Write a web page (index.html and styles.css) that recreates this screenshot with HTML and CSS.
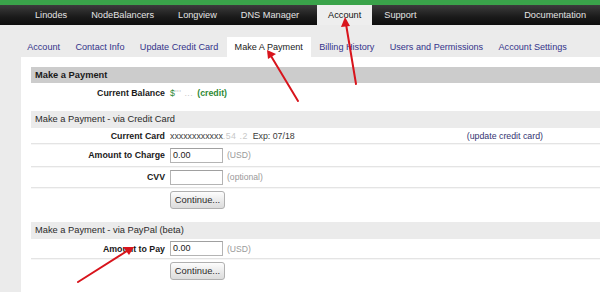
FILE: index.html
```html
<!DOCTYPE html>
<html>
<head>
<meta charset="utf-8">
<link rel="stylesheet" href="styles.css">
</head>
<body>
<div class="greenbar"></div>
<nav class="nav">
  <a class="nav-item">Linodes</a>
  <a class="nav-item">NodeBalancers</a>
  <a class="nav-item">Longview</a>
  <a class="nav-item">DNS Manager</a>
  <a class="nav-item active">Account</a>
  <a class="nav-item">Support</a>
  <a class="nav-item doc">Documentation</a>
</nav>
<div class="subnav">
  <a class="sub-item">Account</a>
  <a class="sub-item">Contact Info</a>
  <a class="sub-item">Update Credit Card</a>
  <a class="sub-item active">Make A Payment</a>
  <a class="sub-item">Billing History</a>
  <a class="sub-item">Users and Permissions</a>
  <a class="sub-item">Account Settings</a>
</div>
<div class="panel">
  <div class="sec-head dark">Make a Payment</div>
  <div class="row balance">
    <div class="label">Current Balance</div>
    <div class="value green">$<span class="blur">''' ...</span> <b>(credit)</b></div>
  </div>

  <div class="sec-head light">Make a Payment - via Credit Card</div>
  <div class="row card lined">
    <div class="label">Current Card</div>
    <div class="value grey">xxxxxxxxxxxx<span class="blur">.54 .2</span>&nbsp; Exp: 07/18</div>
    <a class="update">(update credit card)</a>
  </div>
  <div class="row amount lined">
    <div class="label">Amount to Charge</div>
    <div class="value"><span class="input">0.00</span><span class="hint">(USD)</span></div>
  </div>
  <div class="row cvv lined">
    <div class="label">CVV</div>
    <div class="value"><span class="input"></span><span class="hint">(optional)</span></div>
  </div>
  <div class="row btnrow first">
    <div class="label"></div>
    <div class="value"><span class="button">Continue...</span></div>
  </div>

  <div class="sec-head light">Make a Payment - via PayPal (beta)</div>
  <div class="row pay lined">
    <div class="label">Amount to Pay</div>
    <div class="value"><span class="input">0.00</span><span class="hint">(USD)</span></div>
  </div>
  <div class="row btnrow">
    <div class="label"></div>
    <div class="value"><span class="button">Continue...</span></div>
  </div>
</div>

<svg class="arrows" width="600" height="292" viewBox="0 0 600 292">
  <g stroke="#d8141c" stroke-width="2" fill="none" stroke-linecap="round">
    <line x1="298" y1="101" x2="271" y2="56"/>
    <line x1="356" y1="84" x2="346" y2="24"/>
    <line x1="78" y1="282" x2="127" y2="251"/>
  </g>
  <g fill="#d8141c">
    <polygon points="267,50 276,54 268,59"/>
    <polygon points="345,17 350,26 341,27"/>
    <polygon points="134,247 129,255 123,247"/>
  </g>
</svg>
</body>
</html>
```

FILE: styles.css
```css
* { box-sizing: border-box; }
html, body { margin: 0; padding: 0; }
body {
  width: 600px;
  height: 292px;
  overflow: hidden;
  background: #ebebeb;
  font-family: "Liberation Sans", Arial, sans-serif;
  font-size: 9px;
  color: #222;
  position: relative;
}
a { text-decoration: none; }

.greenbar { height: 5px; background: #3aa34a; }

.nav {
  height: 20px;
  display: flex;
  padding-left: 23px;
  background: linear-gradient(#3c3c3c, #1a1a1a 60%, #0e0e0e);
}
.nav-item {
  padding: 0 12px;
  line-height: 20px;
  color: #e4e4e4;
  font-size: 9.2px;
}
.nav-item.active {
  background: #eeeeee;
  color: #111;
  margin-left: 6px;
  padding: 0 11px;
}
.nav-item.doc { margin-left: auto; padding-right: 14px; }

.subnav {
  display: flex;
  margin-top: 12px;
  padding-left: 19.5px;
  height: 20px;
}
.sub-item {
  padding: 0 7.7px;
  line-height: 20px;
  color: #33338a;
  font-size: 9.1px;
}
.sub-item.active {
  background: #fff;
  color: #1a1a1a;
  margin: 0 1px;
}

.panel {
  margin-left: 21px;
  background: #fff;
  padding: 10px 0 20px 10px;
  height: 240px;
}

.sec-head {
  height: 17px;
  line-height: 17px;
  padding-left: 4px;
  font-size: 9.3px;
}
.sec-head.dark { background: #cccccc; font-weight: bold; height: 16px; line-height: 16px; color: #1a1a1a; }
.sec-head.light { background: #ebebeb; color: #2a2a2a; }

.row { display: flex; align-items: center; }
.label {
  width: 139px;
  padding-right: 5px;
  text-align: right;
  font-weight: bold;
  font-size: 8.8px;
  color: #1a1a1a;
  flex: none;
}
.value { font-size: 8.8px; display: flex; align-items: center; }
.lined {
  border-bottom: 1px solid #e4e4e4;
  box-shadow: 0 1px 0 #f6f6f6;
}

.balance { height: 19px; margin-bottom: 9px; }
.card { height: 16px; }
.amount { height: 23px; }
.cvv { height: 21px; }
.btnrow { height: 26px; align-items: flex-start; padding-top: 3px; }
.btnrow.first { margin-bottom: 8px; }
.pay { height: 20px; }

.green { color: #2f8a36; }
.green b { margin-left: 4px; }
.grey { color: #3a3a3a; }
.blur { color: #c8c8c8; letter-spacing: 0.5px; }
.update {
  margin-left: auto;
  margin-right: 57px;
  color: #333370;
  font-size: 8.8px;
}

.input {
  display: inline-block;
  width: 53px;
  height: 15px;
  border: 1px solid #b4b4b4;
  border-top-color: #a0a0a0;
  padding-left: 2px;
  line-height: 13px;
  font-size: 9px;
  color: #1a1a1a;
  background: #fff;
}
.hint { color: #9a9a9a; margin-left: 4px; font-size: 8.6px; }

.button {
  display: inline-block;
  width: 55px;
  height: 18px;
  line-height: 16px;
  text-align: center;
  border: 1px solid #b0b0b0;
  border-radius: 3px;
  background: linear-gradient(#fdfdfd, #e8e8e8 60%, #dcdcdc);
  color: #2a2a2a;
  font-size: 9.4px;
}

.arrows { position: absolute; left: 0; top: 0; pointer-events: none; }
```
